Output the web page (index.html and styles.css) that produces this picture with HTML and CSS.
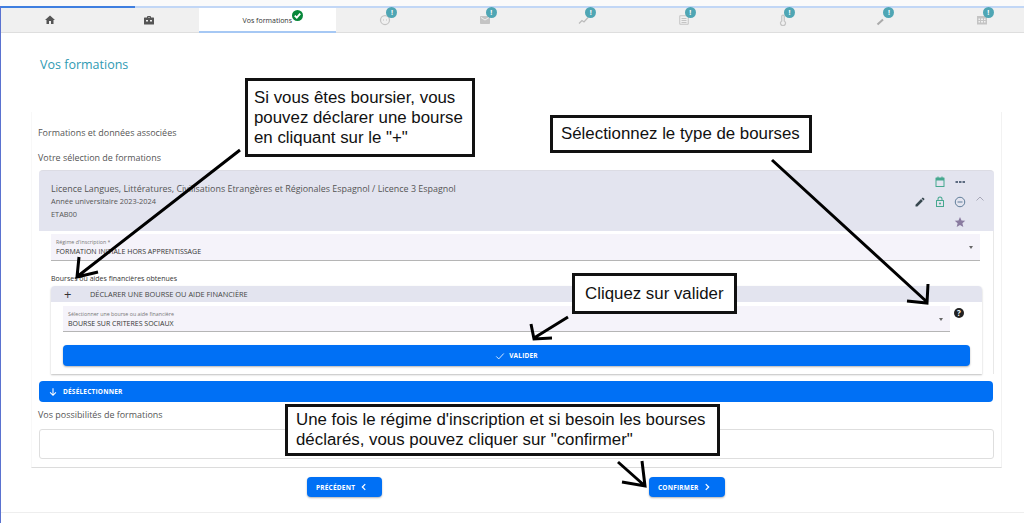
FILE: index.html
```html
<!DOCTYPE html>
<html lang="fr">
<head>
    <meta charset="UTF-8">
    <title>Vos formations</title>
    <link rel="stylesheet" href="styles.css">
</head>
<body>
    <div class="top-line"></div>
    <div class="page">
        <div class="progress"><div class="progress-fill"></div></div>
        <nav class="tabs">
            <div class="tab"><span class="tab-icon"><svg viewBox="0 0 24 24"><path fill="#555" d="M10 20v-6h4v6h5v-8h3L12 3 2 12h3v8z"/></svg></span></div>
            <div class="tab"><span class="tab-icon"><svg viewBox="0 0 24 24"><path fill="#555" d="M10 4h4a2 2 0 0 1 2 2v1h5a1 1 0 0 1 1 1v12a1 1 0 0 1-1 1H3a1 1 0 0 1-1-1V8a1 1 0 0 1 1-1h5V6a2 2 0 0 1 2-2zm0 3h4V6h-4zm-4 5v3h4v-3zm8 0v3h4v-3z" fill-rule="evenodd"/></svg></span></div>
            <div class="tab tab-active"><span class="tab-label">Vos formations<span class="badge badge-ok"><svg viewBox="0 0 12 12"><path d="M3 6.2l2.2 2.2L9 4" fill="none" stroke="#fff" stroke-width="2"/></svg></span></span></div>
            <div class="tab"><span class="tab-icon"><svg viewBox="0 0 24 24"><circle cx="12" cy="12" r="9" fill="none" stroke="#c4c4c4" stroke-width="2.5"/><path d="M8 12h2M14 12h2" stroke="#c4c4c4" stroke-width="2"/></svg><span class="badge">!</span></span></div>
            <div class="tab"><span class="tab-icon"><svg viewBox="0 0 24 24"><path fill="#c4c4c4" d="M20 4H4c-1.1 0-2 .9-2 2v12c0 1.1.9 2 2 2h16c1.1 0 2-.9 2-2V6c0-1.1-.9-2-2-2zm0 4l-8 5-8-5V6l8 5 8-5v2z"/></svg><span class="badge">!</span></span></div>
            <div class="tab"><span class="tab-icon"><svg viewBox="0 0 24 24"><path d="M2 19l6-6 4 3 8-9" fill="none" stroke="#bbb" stroke-width="2.5"/></svg><span class="badge">!</span></span></div>
            <div class="tab"><span class="tab-icon"><svg viewBox="0 0 24 24"><path d="M3.500 3.500h17v17h-17zM7 9h10M7 13h10M7 17h10" fill="none" stroke="#c4c4c4" stroke-width="2"/></svg><span class="badge">!</span></span></div>
            <div class="tab"><span class="tab-icon"><svg viewBox="0 0 24 24"><path d="M9.500 14V4.500a2.500 2.500 0 0 1 5 0V14a5 5 0 1 1-5 0z" fill="none" stroke="#c4c4c4" stroke-width="2.500"/></svg><span class="badge">!</span></span></div>
            <div class="tab"><span class="tab-icon"><svg viewBox="0 0 24 24"><path d="M3 21l11-10" stroke="#aaa" stroke-width="4"/></svg><span class="badge">!</span></span></div>
            <div class="tab"><span class="tab-icon"><svg viewBox="0 0 24 24"><path fill="#c4c4c4" fill-rule="evenodd" d="M2 4h20v17H2zm3 5v3h3V9zm5 0v3h4V9zm6 0v3h3V9zm-11 5v3h3v-3zm5 0v3h4v-3zm6 0v3h3v-3z"/></svg><span class="badge">!</span></span></div>
        </nav>

        <h1 class="page-title">Vos formations</h1>

        <section class="card">
            <div class="section-label section-first">Formations et données associées</div>
            <div class="section-label section-second">Votre sélection de formations</div>

            <div class="accordion">
                <div class="acc-header">
                    <div class="acc-text">
                        <div class="acc-title">Licence Langues, Littératures, Civilisations Etrangères et Régionales Espagnol / Licence 3 Espagnol</div>
                        <div class="acc-sub">Année universitaire 2023-2024</div>
                        <div class="acc-sub acc-sub-last">ETAB00</div>
                    </div>
                    <div class="acc-actions">
                        <span></span>
                        <svg viewBox="0 0 24 24"><path fill="#46a88f" fill-rule="evenodd" d="M7 1h2v2h6V1h2v2h3a1 1 0 0 1 1 1v17a1 1 0 0 1-1 1H4a1 1 0 0 1-1-1V4a1 1 0 0 1 1-1h3zM5 9v11h14V9z"/></svg>
                        <svg viewBox="0 0 24 24"><path fill="#5c6b80" d="M3 10h5v4H3zM10 10h5v4h-5zM17 10h5v4h-5z"/></svg>
                        <span></span>
                        <svg viewBox="0 0 24 24"><path fill="#37474f" d="M3 17.250V21h3.750L17.810 9.940l-3.750-3.750L3 17.250zM20.710 7.040a1 1 0 0 0 0-1.410l-2.340-2.340a1 1 0 0 0-1.410 0l-1.830 1.830 3.750 3.750 1.830-1.830z"/></svg>
                        <svg viewBox="0 0 24 24"><path fill="#46a88f" fill-rule="evenodd" d="M12 1a5 5 0 0 1 5 5v2h2a1 1 0 0 1 1 1v13H4V9a1 1 0 0 1 1-1h2V6a5 5 0 0 1 5-5zm0 2a3 3 0 0 0-3 3v2h6V6a3 3 0 0 0-3-3zm-6 7v10h12V10zm6 3a2 2 0 1 1 0 4 2 2 0 0 1 0-4z"/></svg>
                        <svg viewBox="0 0 24 24"><circle cx="12" cy="12" r="9.500" fill="none" stroke="#5f7d99" stroke-width="2"/><path d="M7 12h10" stroke="#5f7d99" stroke-width="2"/></svg>
                        <svg class="acc-chevron" viewBox="0 0 24 24"><path d="M5 15l7-7 7 7" fill="none" stroke="#a8a8b8" stroke-width="2"/></svg>
                        <span></span>
                        <span></span>
                        <svg viewBox="0 0 24 24"><path fill="#8a7ba0" d="M12 2l3 7 7.500.6-5.700 4.900 1.800 7.500L12 18l-6.600 4 1.800-7.500L1.500 9.600 9 9z"/></svg>
                    </div>
                </div>

                <div class="acc-panel">
                    <div class="select select-regime">
                        <div class="select-label">Régime d'inscription *</div>
                        <div class="select-value">FORMATION INITIALE HORS APPRENTISSAGE</div>
                        <span class="select-arrow"></span>
                    </div>

                    <div class="aid-label">Bourses ou aides financières obtenues</div>

                    <div class="sub-accordion">
                        <div class="sub-header">
                            <span class="sub-plus">+</span>
                            <span>DÉCLARER UNE BOURSE OU AIDE FINANCIÈRE</span>
                        </div>
                        <div class="sub-body">
                            <div class="select-row">
                                <div class="select select-aid">
                                    <div class="select-label">Sélectionner une bourse ou aide financière</div>
                                    <div class="select-value">BOURSE SUR CRITERES SOCIAUX</div>
                                    <span class="select-arrow"></span>
                                </div>
                                <span class="help-icon">?</span>
                            </div>
                            <button class="btn btn-validate">
                                <svg viewBox="0 0 24 24"><path d="M3 13l6 6L21 6" fill="none" stroke="#fff" stroke-width="2"/></svg>
                                VALIDER
                            </button>
                        </div>
                    </div>
                </div>

                <button class="btn btn-deselect">
                    <svg viewBox="0 0 24 24"><path d="M12 3v17M5 13l7 7 7-7" fill="none" stroke="#fff" stroke-width="2.500"/></svg>
                    DÉSÉLECTIONNER
                </button>
            </div>

            <div class="section-label section-third">Vos possibilités de formations</div>
            <div class="empty-box"></div>
        </section>

        <div class="nav-buttons">
            <button class="btn btn-nav">PRÉCÉDENT <svg viewBox="0 0 24 24"><path d="M15 5l-7 7 7 7" fill="none" stroke="#fff" stroke-width="3"/></svg></button>
            <button class="btn btn-nav btn-next">CONFIRMER <svg viewBox="0 0 24 24"><path d="M9 5l7 7-7 7" fill="none" stroke="#fff" stroke-width="3"/></svg></button>
        </div>
        <div class="footer-line"></div>
    </div>

    <!-- Annotations posees sur la capture -->
    <svg class="arrows" viewBox="0 0 1024 523">
        <path d="M240 150L78 276M79 257L77 277L98 272"/>
        <path d="M772 160L927 302M928 284L927 303L907 301"/>
        <path d="M568 317L534 338M531 324L534 339L552 338"/>
        <path d="M618 462L645 486M642 461L645 486L622 482"/>
    </svg>
    <div class="note note-plus">Si vous êtes boursier, vous pouvez déclarer une bourse en cliquant sur le "+"</div>
    <div class="note note-type">Sélectionnez le type de bourses</div>
    <div class="note note-valid">Cliquez sur valider</div>
    <div class="note note-confirm">Une fois le régime d'inscription et si besoin les bourses déclarés, vous pouvez cliquer sur "confirmer"</div>
</body>
</html>
```

FILE: styles.css
```css
* {
    box-sizing: border-box;
}
html, body {
    height: 523px;
    overflow: hidden;
}
body {
    margin: 0;
    position: relative;
    background-color: #fff;
    font-family: "Open Sans", sans-serif;
    color: #444;
}
.top-line {
    height: 6px;
    background-color: #fafafa;
}
.page {
    border-left: 1px solid #5a72d0;
    height: 517px;
    overflow: hidden;
}
.progress {
    height: 2px;
    background-color: #c2d7f6;
}
.progress-fill {
    width: 134px;
    height: 2px;
    background-color: #3f7fe0;
}

/* Onglets */
.tabs {
    display: flex;
    height: 25px;
    margin-left: -1px;
    background-color: #f0f0f0;
    border-bottom: 1px solid #dedede;
}
.tab {
    flex: 0 0 99.400px;
    display: flex;
    align-items: center;
    justify-content: center;
}
.tab-active {
    flex: 0 0 137px;
    background-color: #fff;
    border-bottom: 2px solid #a6c8f4;
    margin-bottom: -1px;
}
.tab-icon {
    position: relative;
    width: 12px;
    height: 12px;
    display: block;
}
.tab-icon svg {
    display: block;
    width: 12px;
    height: 12px;
}
.tab-label {
    position: relative;
    font-size: 7px;
    color: #333;
    top: 1px;
}
.badge {
    position: absolute;
    top: -7px;
    right: -6px;
    width: 11px;
    height: 11px;
    border-radius: 50%;
    background-color: #4fa6b4;
    color: #fff;
    font-size: 7px;
    font-weight: bold;
    line-height: 11px;
    text-align: center;
}
.badge-ok {
    background-color: #07873a;
    top: -6px;
    right: -11px;
}
.badge-ok svg {
    display: block;
    width: 11px;
    height: 11px;
}

.page-title {
    margin: 23px 0 0 39px;
    height: 18px;
    font-size: 12.500px;
    line-height: 18px;
    font-weight: 400;
    color: #2f9ab3;
}

/* Carte principale */
.card {
    margin: 38px 22px 0 30px;
    padding: 14px 7px 8px 6px;
    border-bottom: 1px solid #dcdcdc;
    border-right: 1px solid #f2f2f2;
    border-left: 1px solid #f8f8f8;
}
.section-label {
    height: 14px;
    font-size: 8.950px;
    line-height: 14px;
    color: #555;
}
.section-second {
    margin-top: 11px;
}
.section-third {
    margin-top: 6px;
}
.accordion {
    margin: 5px 0 0 1px;
    width: 955px;
}
.acc-header {
    display: flex;
    justify-content: space-between;
    height: 61px;
    padding-left: 12px;
    background-color: #e3e4ef;
    border-radius: 4px 4px 0 0;
    border-top: 1px solid #dcdce4;
}
.acc-text {
    padding-top: 11px;
}
.acc-title {
    font-size: 8.920px;
    line-height: 14px;
    color: #555;
}
.acc-sub {
    font-size: 7.400px;
    line-height: 10px;
    margin-top: 0;
    color: #555;
}
.acc-sub-last {
    margin-top: 3px;
}
.acc-actions {
    display: grid;
    grid-template-columns: repeat(4, 20px);
    grid-auto-rows: 20px;
    align-items: center;
    justify-items: center;
    margin: 1px 4px 0 0;
}
.acc-actions svg {
    width: 12px;
    height: 12px;
}
.acc-chevron {
    position: relative;
    top: -3px;
}
.acc-panel {
    padding: 3px 13px 0 12px;
    border-right: 1px solid #e8e8e8;
}
.select {
    position: relative;
    height: 27px;
    background-color: #f5f3fa;
    border-bottom: 1px solid #b5b5b5;
    padding: 5px 5px 0;
}
.select-label {
    font-size: 5.300px;
    line-height: 7px;
    color: #777;
}
.select-value {
    font-size: 7px;
    line-height: 11px;
    color: #333;
}
.select-arrow {
    position: absolute;
    right: 7px;
    top: 12px;
    border-left: 2.500px solid transparent;
    border-right: 2.500px solid transparent;
    border-top: 3px solid #666;
}
.aid-label {
    margin-top: 12px;
    height: 12px;
    font-size: 7px;
    line-height: 12px;
    color: #333;
}
.sub-accordion {
    margin-top: 1px;
    width: 931px;
    border-radius: 4px 4px 0 0;
    box-shadow: 0 1px 2px rgba(0, 0, 0, 0.25);
}
.sub-header {
    display: flex;
    align-items: center;
    height: 16px;
    background-color: #e3e4ef;
    border-radius: 4px 4px 0 0;
    font-size: 7.400px;
    color: #444;
}
.sub-plus {
    width: 39px;
    padding-left: 13px;
    font-size: 13px;
    color: #333;
}
.sub-body {
    padding: 4px 12px 8px;
    background-color: #fff;
}
.select-row {
    display: flex;
}
.select-aid {
    width: 887px;
    height: 26px;
}
.help-icon {
    width: 10px;
    height: 10px;
    margin: 2px 0 0 4px;
    border-radius: 50%;
    background-color: #222;
    color: #fff;
    font-size: 8px;
    font-weight: bold;
    line-height: 10px;
    text-align: center;
}
.btn {
    display: flex;
    align-items: center;
    justify-content: center;
    border: none;
    border-radius: 4px;
    background-color: #0070f5;
    color: #fff;
    font-family: "Open Sans", sans-serif;
    font-size: 6.500px;
    font-weight: bold;
    letter-spacing: 0.2px;
    padding: 0;
}
.btn svg {
    width: 10px;
    height: 10px;
}
.btn-validate {
    margin-top: 13px;
    width: 907px;
    height: 21px;
    gap: 4px;
    box-shadow: 0 1px 2px rgba(0, 0, 0, 0.3);
}
.btn-deselect {
    margin-top: 7px;
    width: 954px;
    height: 21px;
    justify-content: flex-start;
    padding-left: 9px;
    gap: 5px;
}
.empty-box {
    margin: 7px 0 0 1px;
    width: 955px;
    height: 30px;
    border: 1px solid #dedede;
    border-radius: 3px;
}
.nav-buttons {
    display: flex;
    gap: 267px;
    margin: 9px 0 0 306px;
}
.btn-nav {
    width: 75px;
    height: 20px;
    justify-content: flex-start;
    padding-left: 9px;
    gap: 4px;
    box-shadow: 0 1px 2px rgba(0, 0, 0, 0.3);
}
.btn-next {
    width: 76px;
}
.footer-line {
    margin-top: 15px;
    border-top: 1px solid #eee;
}

/* Annotations */
.arrows {
    position: absolute;
    left: 0;
    top: 0;
    width: 1024px;
    height: 523px;
}
.arrows path {
    fill: none;
    stroke: #000;
    stroke-width: 3;
}
.note {
    position: absolute;
    background-color: #fff;
    border: 3px solid #111;
    font-family: "Liberation Sans", Arial, sans-serif;
    font-size: 16.850px;
    line-height: 20px;
    color: #111;
}
.note-plus {
    left: 245px;
    top: 78px;
    width: 230px;
    height: 79px;
    padding: 7px 0 0 6px;
}
.note-type {
    left: 550px;
    top: 115px;
    width: 262px;
    height: 38px;
    padding: 6px 0 0 8px;
}
.note-valid {
    left: 572px;
    top: 273px;
    width: 165px;
    height: 41px;
    padding: 8px 0 0 10px;
}
.note-confirm {
    left: 285px;
    top: 404px;
    width: 435px;
    height: 52px;
    padding: 3px 0 0 8px;
}
```
